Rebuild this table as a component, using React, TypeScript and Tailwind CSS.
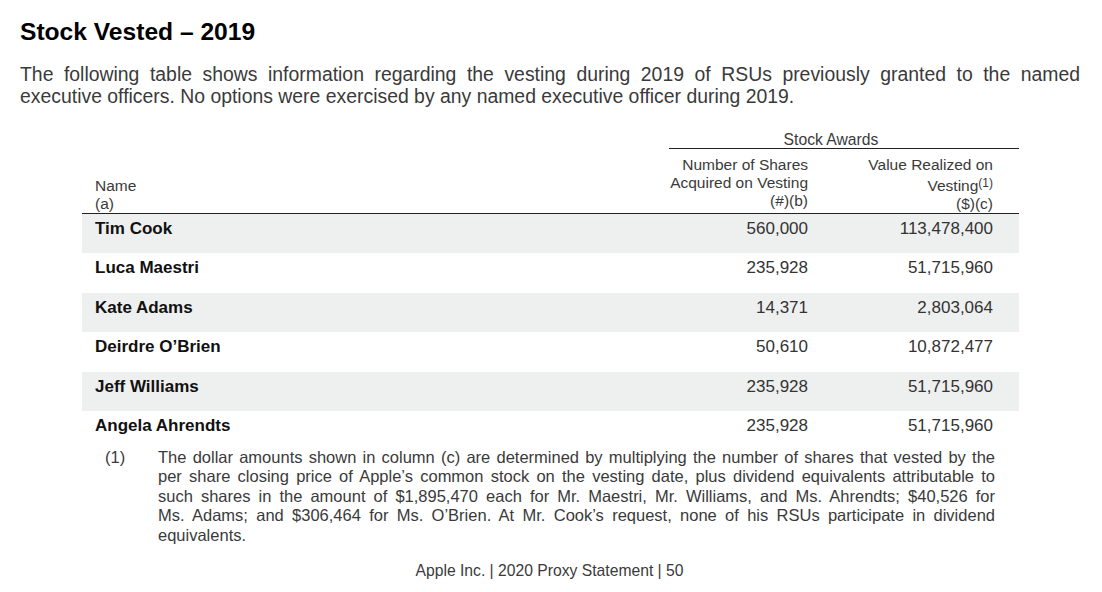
import React from "react";

const rows = [
  { name: "Tim Cook", shares: "560,000", value: "113,478,400", shaded: true },
  { name: "Luca Maestri", shares: "235,928", value: "51,715,960", shaded: false },
  { name: "Kate Adams", shares: "14,371", value: "2,803,064", shaded: true },
  { name: "Deirdre O\u2019Brien", shares: "50,610", value: "10,872,477", shaded: false },
  { name: "Jeff Williams", shares: "235,928", value: "51,715,960", shaded: true },
  { name: "Angela Ahrendts", shares: "235,928", value: "51,715,960", shaded: false },
];

const footLines = [
  "The dollar amounts shown in column (c) are determined by multiplying the number of shares that vested by the",
  "per share closing price of Apple\u2019s common stock on the vesting date, plus dividend equivalents attributable to",
  "such shares in the amount of $1,895,470 each for Mr. Maestri, Mr. Williams, and Ms. Ahrendts; $40,526 for",
  "Ms. Adams; and $306,464 for Ms. O\u2019Brien. At Mr. Cook\u2019s request, none of his RSUs participate in dividend",
];

export default function App() {
  return (
    <div
      className="w-[1102px] h-[592px] bg-white overflow-hidden text-[#333]"
      style={{ fontFamily: '"Liberation Sans", Arial, sans-serif' }}
    >
      <h1 className="pt-[18px] pl-[20px] text-[24.6px] leading-[28px] font-bold text-black">
        Stock Vested – 2019
      </h1>
      <div className="mt-[17px] ml-[20px] w-[1060px] text-[19.4px] leading-[22px] text-[#3a3a3a]">
        <div className="whitespace-nowrap text-justify [text-align-last:justify]">
          The following table shows information regarding the vesting during 2019 of RSUs previously granted to the named
        </div>
        <div className="whitespace-nowrap">
          executive officers. No options were exercised by any named executive officer during 2019.
        </div>
      </div>

      <div className="ml-[82px] w-[937px] mt-[24px]">
        {/* Stock Awards group header */}
        <div className="grid grid-cols-[587px_350px]">
          <div />
          <div className="text-center text-[15.7px] leading-[18px] border-b border-[#222] h-[18px] pr-[26px] text-[#3a3a3a]">
            Stock Awards
          </div>
        </div>
        {/* Column headers */}
        <div className="grid grid-cols-[587px_150px_200px] border-b-[1.5px] border-[#222] pt-[6.5px] text-[15.5px] leading-[18px] text-[#3a3a3a]">
          <div className="flex flex-col justify-end pl-[13px]">
            <div>Name</div>
            <div>(a)</div>
          </div>
          <div className="text-right pr-[11px]">
            <div>Number of Shares</div>
            <div>Acquired on Vesting</div>
            <div>(#)(b)</div>
          </div>
          <div className="text-right pr-[26px]">
            <div>Value Realized on</div>
            <div>
              Vesting<span className="text-[12px] align-[4px]">(1)</span>
            </div>
            <div>($)(c)</div>
          </div>
        </div>
        {/* Body rows */}
        {rows.map((r, i) => (
          <div
            key={r.name}
            className={
              "grid grid-cols-[587px_150px_200px] pt-[5px] text-[17px] leading-[20px] " +
              (r.shaded ? "bg-[#eeefef] " : "bg-white ") +
              (i === rows.length - 1 ? "h-[36px]" : "h-[39.6px]")
            }
          >
            <div className="pl-[13px] font-bold text-[#111]">{r.name}</div>
            <div className="text-right pr-[11px] text-[#333]">{r.shares}</div>
            <div className="text-right pr-[26px] text-[#333]">{r.value}</div>
          </div>
        ))}
        {/* Footnote */}
        <div className="flex mt-[0.5px] text-[16.5px] leading-[19.5px] text-[#3a3a3a]">
          <div className="w-[76px] shrink-0 pl-[23px]">(1)</div>
          <div className="w-[837px]">
            {footLines.map((l) => (
              <div key={l} className="whitespace-nowrap text-justify [text-align-last:justify]">
                {l}
              </div>
            ))}
            <div className="whitespace-nowrap">equivalents.</div>
          </div>
        </div>
      </div>

      <div className="mt-[16.5px] text-center text-[15.7px] leading-[18px] text-[#3a3a3a] pr-[3px]">
        Apple Inc. | 2020 Proxy Statement | 50
      </div>
    </div>
  );
}
